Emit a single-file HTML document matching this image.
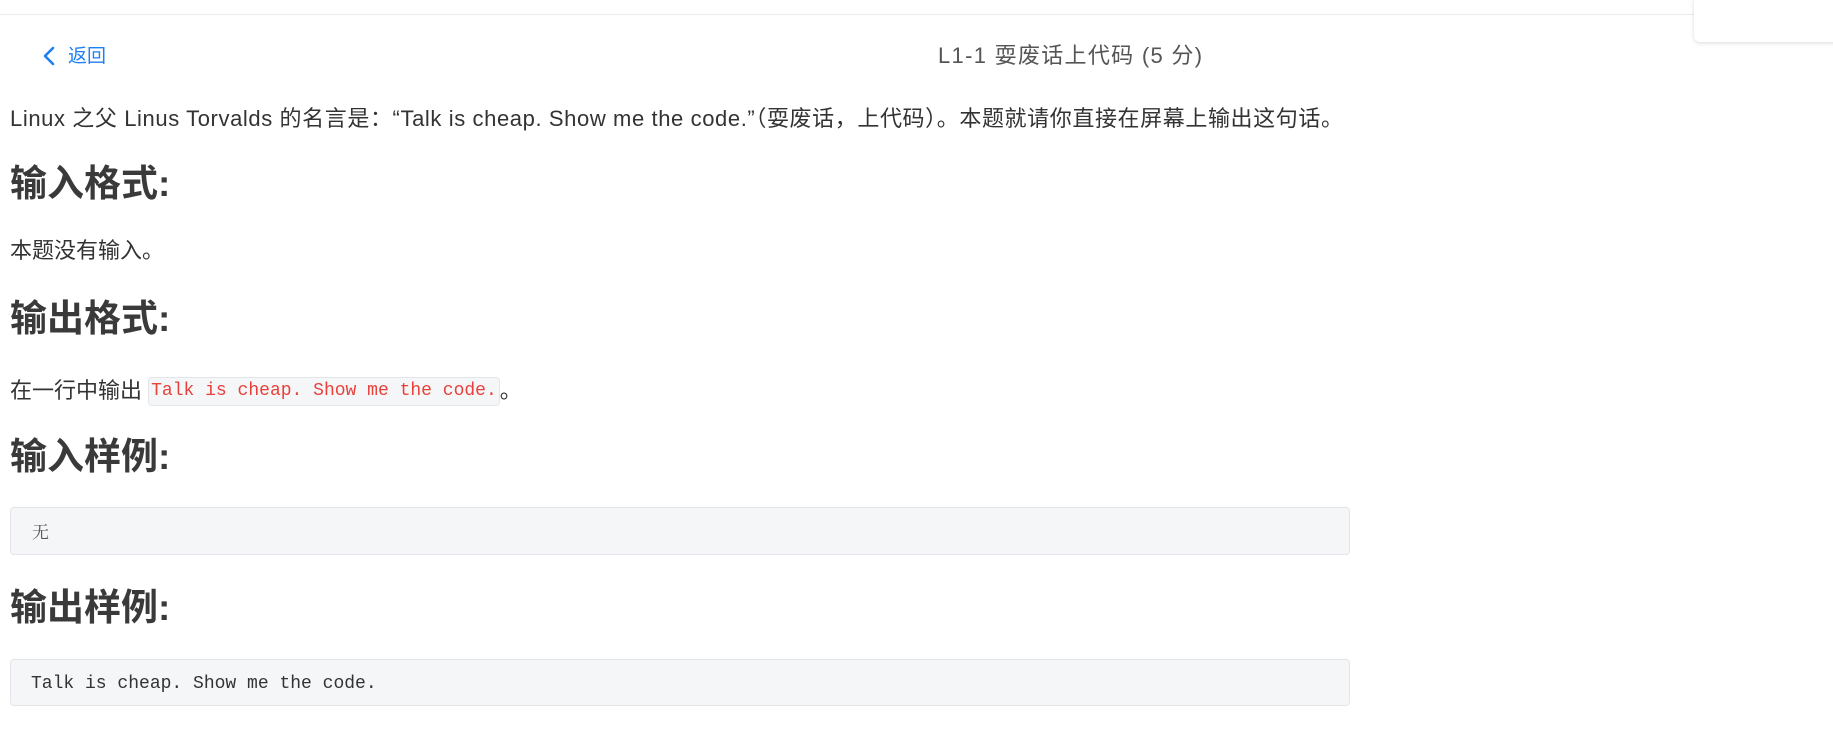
<!DOCTYPE html>
<html><head><meta charset="utf-8"><style>
body{margin:0;width:1833px;height:738px;background:#fff;position:relative;overflow:hidden;font-family:"Liberation Sans","Noto Sans CJK SC",sans-serif;color:#333;}
.a{position:absolute;white-space:nowrap;}
.p{font-size:22px;line-height:28px;}
.h{font-size:37px;line-height:46px;color:#3a3a3a;font-weight:600;}
.pre{position:absolute;left:10px;width:1340px;background:#f5f6f8;border:1px solid #e3e5e8;border-radius:4px;box-sizing:border-box;}
.mono{font-family:"Liberation Mono","Noto Sans CJK SC",monospace;font-size:18px;}
</style></head><body>
<div class="a" style="left:0;top:14px;width:1833px;height:1px;background:#ececec"></div>
<div class="a" style="left:1694px;top:-4px;width:145px;height:46px;background:#fff;border-radius:6px;box-shadow:0 1px 4px rgba(0,0,0,0.15)"></div>
<svg class="a" style="left:40px;top:46px" width="18" height="20" viewBox="0 0 18 20"><path d="M13 2 L5 10 L13 18" fill="none" stroke="#1e7ef5" stroke-width="2.6" stroke-linecap="round" stroke-linejoin="round"/></svg>
<div class="a" style="left:68px;top:44px;font-size:19px;line-height:26px;color:#1e7ef5">返回</div>
<div class="a" style="left:938px;top:42px;font-size:22px;line-height:28px;color:#555;letter-spacing:1.3px">L1-1 耍废话上代码 (5 分)</div>
<div class="a p" style="left:10px;top:105px;letter-spacing:0.6px">Linux 之父 Linus Torvalds 的名言是：“Talk is cheap. Show me the code.”（耍废话，上代码）。本题就请你直接在屏幕上输出这句话。</div>
<div class="a h" style="left:10px;top:161px">输入格式:</div>
<div class="a p" style="left:10px;top:237px">本题没有输入。</div>
<div class="a h" style="left:10px;top:296px">输出格式:</div>
<div class="a p" style="left:10px;top:377px">在一行中输出 <span class="mono" style="display:inline-block;color:#e8413b;background:#f5f6f8;border:1px solid #e3e5e8;border-radius:4px;padding:0 2px;line-height:27px;vertical-align:top">Talk is cheap. Show me the code.</span>。</div>
<div class="a h" style="left:10px;top:434px">输入样例:</div>
<div class="pre" style="top:507px;height:48px"><div class="a" style="left:21px;top:11px;font-size:17px;line-height:24px;color:#555;font-family:'Noto Serif CJK SC',serif">无</div></div>
<div class="a h" style="left:10px;top:585px">输出样例:</div>
<div class="pre" style="top:659px;height:47px"><div class="a mono" style="left:20px;top:12px;line-height:24px;color:#333">Talk is cheap. Show me the code.</div></div>
</body></html>
